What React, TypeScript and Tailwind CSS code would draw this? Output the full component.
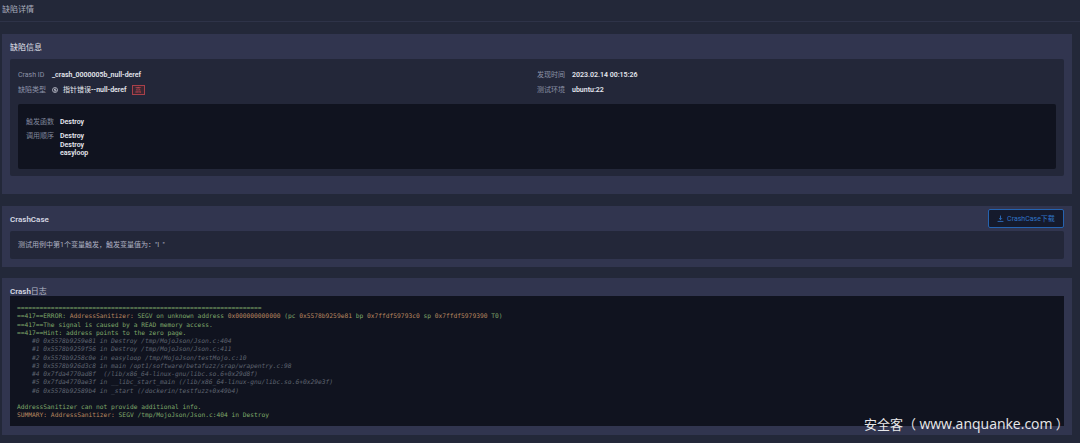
// 缺陷详情页面
import React from 'react';

const UI_FONT = 'font-["Roboto","Noto_Sans_CJK_SC",sans-serif]';

const green = 'text-[#7fa86a]';
const orange = 'text-[#b9875f]';

const frames = [
  '#0 0x5578b9259e81 in Destroy /tmp/MojoJson/Json.c:404',
  '#1 0x5578b9259f56 in Destroy /tmp/MojoJson/Json.c:411',
  '#2 0x5578b9258c0e in easyloop /tmp/MojoJson/testMojo.c:10',
  '#3 0x5578b926d3c8 in main /opt1/software/betafuzz/srap/wrapentry.c:98',
  '#4 0x7fda4770ad8f  (/lib/x86_64-linux-gnu/libc.so.6+0x29d8f)',
  '#5 0x7fda4770ae3f in __libc_start_main (/lib/x86_64-linux-gnu/libc.so.6+0x29e3f)',
  '#6 0x5578b92589b4 in _start (/dockerin/testfuzz+0x49b4)',
];

function Field({ label, labelWidth, children }: { label: string; labelWidth: string; children: React.ReactNode }) {
  return (
    <div className="flex h-[15px] items-center">
      <span className={`${labelWidth} shrink-0 text-[#8d93a8]`}>{label}</span>
      <span className="font-semibold text-[#e6e8ef]">{children}</span>
    </div>
  );
}

export default function App() {
  return (
    <div className={`h-[443px] w-[1080px] overflow-hidden bg-[#232839] text-[7px] leading-[8px] ${UI_FONT}`}>
      {/* HEADER */}
      <div className="flex h-[22px] items-center border-b border-[#2e3348] pb-[2px] pl-[2px] text-[8px] text-[#a9adbd]">
        缺陷详情
      </div>

      <div className="ml-[2px] mr-[8px] mt-[12px] flex flex-col">
        {/* 缺陷信息 */}
        <section className="h-[160px] bg-[#31354f] px-[8px]">
          <h2 className="flex h-[25px] items-center pt-[3px] text-[8px] font-medium text-[#c9ccd8]">缺陷信息</h2>
          <div className="h-[117px] rounded-[2px] bg-[#232739] px-[8px] pt-[8px]">
            <div className="flex">
              <div className="flex w-[519px] flex-col">
                <Field label="Crash ID" labelWidth="w-[34px]">_crash_0000005b_null-deref</Field>
                <Field label="缺陷类型" labelWidth="w-[34px]">
                  <span className="flex items-center">
                    <svg width="6" height="6" viewBox="0 0 12 12" fill="none" stroke="#c9ccd8" strokeWidth="1.5" className="mr-[5px]">
                      <circle cx="6" cy="6" r="5" />
                      <path d="M8 4H5v2h3v2H4" />
                    </svg>
                    <span className="font-normal">指针错误</span>--null-deref
                    <span className="ml-[5px] flex h-[10px] w-[13px] items-center justify-center border border-[#a8404a] bg-[#3a2733] text-[6px] font-normal text-[#d9505a]">
                      高
                    </span>
                  </span>
                </Field>
              </div>
              <div className="flex flex-col">
                <Field label="发现时间" labelWidth="w-[35px]">2023.02.14 00:15:26</Field>
                <Field label="测试环境" labelWidth="w-[35px]">ubuntu:22</Field>
              </div>
            </div>

            <div className="mt-[7px] h-[65px] rounded-[2px] bg-[#10131f] px-[8px] pt-[14px]">
              <div className="flex">
                <span className="w-[34px] text-[#7f8599]">触发函数</span>
                <span className="font-semibold text-[#e6e8ef]">Destroy</span>
              </div>
              <div className="mt-[6px] flex">
                <span className="w-[34px] text-[#7f8599]">调用顺序</span>
                <div className="flex flex-col font-semibold leading-[8.5px] text-[#e6e8ef]">
                  <span>Destroy</span>
                  <span>Destroy</span>
                  <span>easyloop</span>
                </div>
              </div>
            </div>
          </div>
        </section>

        {/* CrashCase */}
        <section className="mt-[12px] h-[61px] bg-[#31354f] px-[8px]">
          <div className="flex h-[25px] items-start justify-between">
            <h2 className="mt-[10px] text-[8px] font-semibold text-[#d5d8e2]">CrashCase</h2>
            <button className="mt-[3px] flex h-[19px] w-[76px] items-center justify-center gap-[3px] rounded-[2px] border border-[#2563b0] bg-[#151a2c] text-[7px] text-[#2f74c8]">
              <svg width="7" height="7" viewBox="0 0 12 12" fill="none" stroke="#2f74c8" strokeWidth="1.5">
                <path d="M6 1v7M3.500 5.500 6 8l2.500-2.500M1 11h10" />
              </svg>
              CrashCase下载
            </button>
          </div>
          <div className="flex h-[28px] items-center rounded-[2px] bg-[#232739] px-[8px] text-[#aeb2c2]">
            测试用例中第1个变量触发，触发变量值为：&quot;I&nbsp;&nbsp;&quot;
          </div>
        </section>

        {/* Crash日志 */}
        <section className="mt-[11px] h-[157px] bg-[#31354f] px-[8px]">
          <h2 className="flex h-[18px] items-center pt-[10px] text-[8px] font-semibold text-[#d5d8e2]">
            Crash<span className="font-normal text-[#b4b8c6]">日志</span>
          </h2>
          <pre className={`h-[130px] overflow-hidden bg-[#10131f] pl-[7px] pt-[8px] font-['DejaVu_Sans_Mono',monospace] text-[6.25px] leading-[8.25px] ${green}`}>
            <div>{'='.repeat(65)}</div>
            <div>
              ==417==ERROR: <span className={orange}>AddressSanitizer:</span> SEGV on unknown address{' '}
              <span className={orange}>0x000000000000</span> (pc <span className={orange}>0x5578b9259e81</span> bp{' '}
              <span className={orange}>0x7ffdf59793c0</span> sp <span className={orange}>0x7ffdf5979390</span> T0)
            </div>
            <div>==417==The signal is caused by a READ memory access.</div>
            <div>==417==Hint: address points to the zero page.</div>
            {frames.map(frame => (
              <div key={frame} className="pl-[15px] italic text-[#5f6470]">
                {frame}
              </div>
            ))}
            <div>&nbsp;</div>
            <div>AddressSanitizer can not provide additional info.</div>
            <div>
              <span className={orange}>SUMMARY: AddressSanitizer:</span> SEGV /tmp/MojoJson/Json.c:404 in Destroy
            </div>
          </pre>
        </section>
      </div>

      {/* 水印 */}
      <div className="absolute left-[864px] top-[416px] font-['Open_Sans','Noto_Sans_CJK_SC',sans-serif] text-[13px] leading-[16px] text-[#e8e8ea]">
        安全客（ <span className="text-[14px]">www.anquanke.com</span> ）
      </div>
    </div>
  );
}
